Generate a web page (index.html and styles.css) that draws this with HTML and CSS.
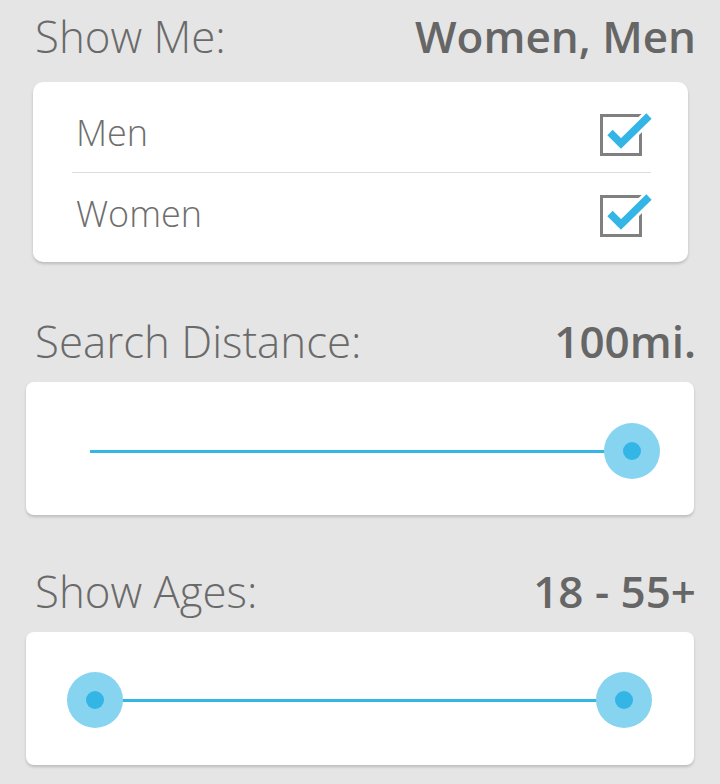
FILE: index.html
```html
<!DOCTYPE html>
<html>
<head>
<meta charset="utf-8">
<link rel="stylesheet" href="styles.css">
</head>
<body>
<div class="page">
  <div class="head head-first">
    <span class="label">Show Me:</span>
    <span class="value">Women, Men</span>
  </div>
  <div class="card card-list">
    <div class="row">
      <span class="item">Men</span>
      <svg class="check" width="56" height="50" viewBox="595 108 56 50">
        <rect x="600.5" y="114.5" width="39" height="39" fill="none" stroke="#808080" stroke-width="3"/>
        <polyline points="609,131.5 620,142.5 648,115" fill="none" stroke="#ffffff" stroke-width="13" stroke-linejoin="miter"/>
        <polyline points="609,131.5 620,142.5 648,115" fill="none" stroke="#33b5e5" stroke-width="7.5" stroke-linejoin="miter"/>
      </svg>
    </div>
    <div class="divider"></div>
    <div class="row">
      <span class="item">Women</span>
      <svg class="check" width="56" height="50" viewBox="595 108 56 50">
        <rect x="600.5" y="114.5" width="39" height="39" fill="none" stroke="#808080" stroke-width="3"/>
        <polyline points="609,131.5 620,142.5 648,115" fill="none" stroke="#ffffff" stroke-width="13" stroke-linejoin="miter"/>
        <polyline points="609,131.5 620,142.5 648,115" fill="none" stroke="#33b5e5" stroke-width="7.5" stroke-linejoin="miter"/>
      </svg>
    </div>
  </div>

  <div class="head head-second">
    <span class="label">Search Distance:</span>
    <span class="value">100mi.</span>
  </div>
  <div class="card card-slider slider-distance">
    <div class="track">
      <span class="thumb thumb-end"></span>
    </div>
  </div>

  <div class="head head-third">
    <span class="label">Show Ages:</span>
    <span class="value">18 - 55+</span>
  </div>
  <div class="card card-slider slider-ages">
    <div class="track">
      <span class="thumb thumb-start"></span>
      <span class="thumb thumb-end"></span>
    </div>
  </div>
</div>
</body>
</html>
```

FILE: styles.css
```css
* {
  box-sizing: border-box;
}
html, body {
  margin: 0;
  padding: 0;
  background: #e5e5e5;
}
body {
  font-family: "Open Sans", "Noto Sans", sans-serif;
  width: 720px;
  height: 784px;
  overflow: hidden;
}
.page {
  padding: 11px 26px 0 26px;
}
.head {
  display: flex;
  justify-content: space-between;
  align-items: baseline;
  height: 50px;
  line-height: 50px;
  padding-left: 9px;
  margin-right: -2px;
}
.label {
  font-size: 43.8px;
  font-weight: 300;
  color: #6a6a6a;
}
.value {
  font-size: 44px;
  font-weight: 600;
  color: #666666;
}
.head-second {
  margin-top: 54px;
}
.head-third {
  margin-top: 51px;
}
.card {
  background: #ffffff;
  border-radius: 10px;
  box-shadow: 0 2px 3px rgba(0, 0, 0, 0.18);
}
.card-list {
  margin: 21px 6px 0 7px;
  padding: 10px 0 9px 0;
}
.row {
  display: flex;
  justify-content: space-between;
  align-items: center;
  height: 80px;
  padding: 0 36px 0 43px;
}
.item {
  font-size: 36px;
  font-weight: 300;
  color: #6e6e6e;
  line-height: 45px;
}
.check {
  display: block;
  margin-top: 4px;
}
.divider {
  height: 1px;
  background: #dcdcdc;
  margin: 0 37px 0 39px;
}
.card-slider {
  margin-top: 16px;
  height: 133px;
  display: flex;
  align-items: center;
  border-radius: 8px;
}
.slider-distance {
  padding: 5px 62px 0 64px;
}
.slider-ages {
  padding: 3px 70px 0 69px;
}
.track {
  position: relative;
  flex: 1;
  height: 3px;
  background: #33b5e5;
}
.thumb {
  position: absolute;
  top: 50%;
  width: 56px;
  height: 56px;
  margin-top: -28px;
  border-radius: 50%;
  background: #87d4f0;
}
.thumb::after {
  content: "";
  position: absolute;
  left: 19px;
  top: 19px;
  width: 18px;
  height: 18px;
  border-radius: 50%;
  background: #33b5e5;
}
.thumb-end {
  right: -28px;
}
.thumb-start {
  left: -28px;
}
```
